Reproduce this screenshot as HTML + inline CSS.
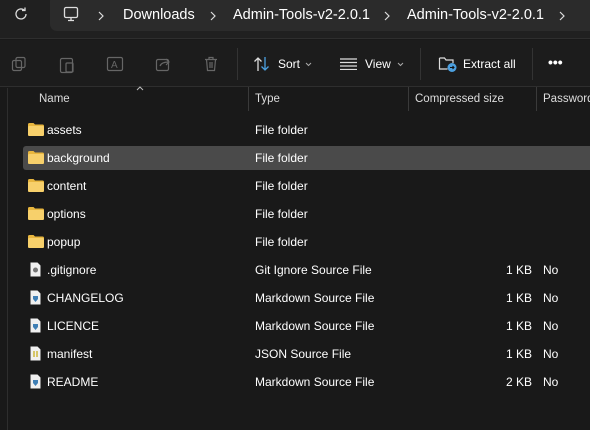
<!DOCTYPE html>
<html><head><meta charset="utf-8"><style>
*{margin:0;padding:0;box-sizing:border-box}
body{width:590px;height:430px;overflow:hidden;background:#191919;font-family:"Liberation Sans",sans-serif;color:#fff;position:relative}
.top{position:absolute;left:0;top:0;width:590px;height:39px;background:#202020;border-bottom:1px solid #2e2e2e}
.addr{position:absolute;left:50px;top:-6px;width:560px;height:37px;background:#2b2b2b;border-radius:7px}
.bc{position:absolute;top:7px;font-size:14.5px;color:#fff}
.chev{position:absolute;top:11px}
.tb{position:absolute;top:40px;height:47px;width:590px;background:#1c1c1c;border-bottom:1px solid #2e2e2e}
.ic{position:absolute;top:16px}
.sep{position:absolute;top:8px;width:1px;height:32px;background:#333}
.tl{position:absolute;top:17px;font-size:12px;color:#fff}
.hd{position:absolute;top:93px;font-size:11.5px;color:#ddd}
.vl{position:absolute;top:87px;width:1px;height:24px;background:#3a3a3a}
.row{position:absolute;left:23px;width:567px;height:24px;font-size:12px;color:#fff}
.row.sel{background:#4a4a4a;border-radius:3px 0 0 3px}
.row span{position:absolute;top:5px}
.fold{position:absolute;left:5px;top:5px;width:16px;height:13px}
</style></head><body>
<div class="top">
 <svg style="position:absolute;left:13px;top:6px" width="16" height="16" viewBox="0 0 16 16"><path d="M13 8a5 5 0 1 1-1.6-3.7M12 1.5v3h-3" fill="none" stroke="#ddd" stroke-width="1.3"/></svg>
 <div class="addr"></div>
 <svg style="position:absolute;left:63px;top:6px" width="16" height="16" viewBox="0 0 16 16"><rect x="1.5" y="1.5" width="13" height="10" rx="1.5" fill="none" stroke="#ddd" stroke-width="1.3"/><path d="M5 14.5h6M8 11.5v3" stroke="#ddd" stroke-width="1.3"/></svg>
 <svg class="chev" style="left:98px" width="6" height="10" viewBox="0 0 6 10"><path d="M1 1l4 4-4 4" fill="none" stroke="#ddd" stroke-width="1.2"/></svg>
 <span class="bc" style="left:123px">Downloads</span>
 <svg class="chev" style="left:210px" width="6" height="10" viewBox="0 0 6 10"><path d="M1 1l4 4-4 4" fill="none" stroke="#ddd" stroke-width="1.2"/></svg>
 <span class="bc" style="left:233px">Admin-Tools-v2-2.0.1</span>
 <svg class="chev" style="left:384px" width="6" height="10" viewBox="0 0 6 10"><path d="M1 1l4 4-4 4" fill="none" stroke="#ddd" stroke-width="1.2"/></svg>
 <span class="bc" style="left:407px">Admin-Tools-v2-2.0.1</span>
 <svg class="chev" style="left:559px" width="6" height="10" viewBox="0 0 6 10"><path d="M1 1l4 4-4 4" fill="none" stroke="#ddd" stroke-width="1.2"/></svg>
</div>
<div class="tb">
 <svg class="ic" style="left:11px" width="16" height="16" viewBox="0 0 16 16" fill="none" stroke="#666" stroke-width="1.2"><rect x="5" y="1.5" width="9" height="10" rx="1.5"/><rect x="1.5" y="4.5" width="9" height="10" rx="1.5"/></svg>
 <svg class="ic" style="left:59px" width="16" height="18" viewBox="0 0 16 18" fill="none" stroke="#666" stroke-width="1.2"><rect x="1.5" y="2.5" width="12" height="14" rx="1.5"/><rect x="7" y="7" width="7" height="9" rx="1"/></svg>
 <svg class="ic" style="left:106px" width="18" height="16" viewBox="0 0 18 16" fill="none" stroke="#666" stroke-width="1.2"><rect x="1.5" y="1.5" width="15" height="13" rx="1.5"/><text x="5" y="12" font-size="10" fill="#666" stroke="none" font-family="Liberation Sans">A</text></svg>
 <svg class="ic" style="left:155px" width="16" height="16" viewBox="0 0 16 16" fill="none" stroke="#666" stroke-width="1.2"><rect x="1.5" y="3.5" width="12" height="11" rx="1.5"/><path d="M5 10c1-3 4-4 9-4M11 3l3 3-3 3"/></svg>
 <svg class="ic" style="left:203px" width="16" height="16" viewBox="0 0 16 16" fill="none" stroke="#666" stroke-width="1.2"><path d="M2 3.5h12M6 3.5V1.5h4v2M3.5 3.5l1 11h7l1-11M7 6v6M9 6v6"/></svg>
 <div class="sep" style="left:237px"></div>
 <svg class="ic" style="left:253px" width="18" height="16" viewBox="0 0 18 16" fill="none" stroke-width="1.3"><path d="M5 15V2M1.5 5.5L5 2l3.5 3.5" stroke="#ddd"/><path d="M12 1v13M8.5 10.5L12 14l3.5-3.5" stroke="#4ca0e0"/></svg>
 <span class="tl" style="left:278px">Sort</span>
 <svg style="position:absolute;left:305px;top:22px" width="7" height="5" viewBox="0 0 7 5"><path d="M1 1l2.5 2.5L6 1" fill="none" stroke="#aaa" stroke-width="1"/></svg>
 <svg class="ic" style="left:340px;top:18px" width="17" height="12" viewBox="0 0 17 12" stroke="#ddd" stroke-width="1.2"><path d="M0 1h17M0 4.5h17M0 8h17M0 11.5h17"/></svg>
 <span class="tl" style="left:365px">View</span>
 <svg style="position:absolute;left:397px;top:22px" width="7" height="5" viewBox="0 0 7 5"><path d="M1 1l2.5 2.5L6 1" fill="none" stroke="#aaa" stroke-width="1"/></svg>
 <div class="sep" style="left:420px"></div>
 <svg class="ic" style="left:438px;top:15px" width="20" height="18" viewBox="0 0 20 18" fill="none"><path d="M1.5 3h5l1.5 2h7v3M1.5 3v11h8" stroke="#ddd" stroke-width="1.2"/><circle cx="14" cy="12.5" r="4.5" fill="#4ca0e0"/><path d="M12 12.5h4M14.5 11l1.5 1.5-1.5 1.5" stroke="#111" stroke-width="1"/></svg>
 <span class="tl" style="left:463px">Extract all</span>
 <div class="sep" style="left:532px"></div>
 <span class="tl" style="left:548px;font-weight:bold;top:14px;font-size:14px">•••</span>
</div>
<div style="position:absolute;left:7px;top:88px;width:1px;height:342px;background:#2e2e2e"></div>
<svg style="position:absolute;left:136px;top:86px" width="8" height="5" viewBox="0 0 8 5"><path d="M1 4l3-3 3 3" fill="none" stroke="#bbb" stroke-width="1"/></svg>
<span class="hd" style="left:39px">Name</span>
<div class="vl" style="left:248px"></div><span class="hd" style="left:255px">Type</span>
<div class="vl" style="left:408px"></div><span class="hd" style="left:415px">Compressed size</span>
<div class="vl" style="left:536px"></div><span class="hd" style="left:543px">Password</span>

<div class="row" style="top:118px"><svg class="fold" viewBox="0 0 16 13"><path d="M0 1.5Q0 0 1.5 0h4l1.5 1.5h7.5Q16 1.5 16 3v8.5Q16 13 14.5 13h-13Q0 13 0 11.5z" fill="#e8b63e"/><rect x="0" y="3" width="16" height="10" rx="1.2" fill="#f7d06b"/></svg><span style="left:24px">assets</span><span style="left:232px">File folder</span></div>
<div class="row sel" style="top:146px"><svg class="fold" viewBox="0 0 16 13"><path d="M0 1.5Q0 0 1.5 0h4l1.5 1.5h7.5Q16 1.5 16 3v8.5Q16 13 14.5 13h-13Q0 13 0 11.5z" fill="#e8b63e"/><rect x="0" y="3" width="16" height="10" rx="1.2" fill="#f7d06b"/></svg><span style="left:24px">background</span><span style="left:232px">File folder</span></div>
<div class="row" style="top:174px"><svg class="fold" viewBox="0 0 16 13"><path d="M0 1.5Q0 0 1.5 0h4l1.5 1.5h7.5Q16 1.5 16 3v8.5Q16 13 14.5 13h-13Q0 13 0 11.5z" fill="#e8b63e"/><rect x="0" y="3" width="16" height="10" rx="1.2" fill="#f7d06b"/></svg><span style="left:24px">content</span><span style="left:232px">File folder</span></div>
<div class="row" style="top:202px"><svg class="fold" viewBox="0 0 16 13"><path d="M0 1.5Q0 0 1.5 0h4l1.5 1.5h7.5Q16 1.5 16 3v8.5Q16 13 14.5 13h-13Q0 13 0 11.5z" fill="#e8b63e"/><rect x="0" y="3" width="16" height="10" rx="1.2" fill="#f7d06b"/></svg><span style="left:24px">options</span><span style="left:232px">File folder</span></div>
<div class="row" style="top:230px"><svg class="fold" viewBox="0 0 16 13"><path d="M0 1.5Q0 0 1.5 0h4l1.5 1.5h7.5Q16 1.5 16 3v8.5Q16 13 14.5 13h-13Q0 13 0 11.5z" fill="#e8b63e"/><rect x="0" y="3" width="16" height="10" rx="1.2" fill="#f7d06b"/></svg><span style="left:24px">popup</span><span style="left:232px">File folder</span></div>

<div class="row" style="top:258px"><svg style="position:absolute;left:7px;top:4px" width="11" height="15" viewBox="0 0 11 15"><path d="M0.5 0.5h7l3 3v11h-10z" fill="#f0f0f0"/><circle cx="5.5" cy="8" r="2.5" fill="#777"/></svg><span style="left:24px">.gitignore</span><span style="left:232px">Git Ignore Source File</span><span style="left:483px">1 KB</span><span style="left:520px">No</span></div>
<div class="row" style="top:286px"><svg style="position:absolute;left:7px;top:4px" width="11" height="15" viewBox="0 0 11 15"><path d="M0.5 0.5h7l3 3v11h-10z" fill="#f0f0f0"/><path d="M3 6h5v3l-2.5 3-2.5-3z" fill="#3f7fb5"/></svg><span style="left:24px">CHANGELOG</span><span style="left:232px">Markdown Source File</span><span style="left:483px">1 KB</span><span style="left:520px">No</span></div>
<div class="row" style="top:314px"><svg style="position:absolute;left:7px;top:4px" width="11" height="15" viewBox="0 0 11 15"><path d="M0.5 0.5h7l3 3v11h-10z" fill="#f0f0f0"/><path d="M3 6h5v3l-2.5 3-2.5-3z" fill="#3f7fb5"/></svg><span style="left:24px">LICENCE</span><span style="left:232px">Markdown Source File</span><span style="left:483px">1 KB</span><span style="left:520px">No</span></div>
<div class="row" style="top:342px"><svg style="position:absolute;left:7px;top:4px" width="11" height="15" viewBox="0 0 11 15"><path d="M0.5 0.5h7l3 3v11h-10z" fill="#f0f0f0"/><path d="M4 5v6M7 5v6" stroke="#c9b020" stroke-width="1.3"/></svg><span style="left:24px">manifest</span><span style="left:232px">JSON Source File</span><span style="left:483px">1 KB</span><span style="left:520px">No</span></div>
<div class="row" style="top:370px"><svg style="position:absolute;left:7px;top:4px" width="11" height="15" viewBox="0 0 11 15"><path d="M0.5 0.5h7l3 3v11h-10z" fill="#f0f0f0"/><path d="M3 6h5v3l-2.5 3-2.5-3z" fill="#3f7fb5"/></svg><span style="left:24px">README</span><span style="left:232px">Markdown Source File</span><span style="left:483px">2 KB</span><span style="left:520px">No</span></div>
</body></html>
